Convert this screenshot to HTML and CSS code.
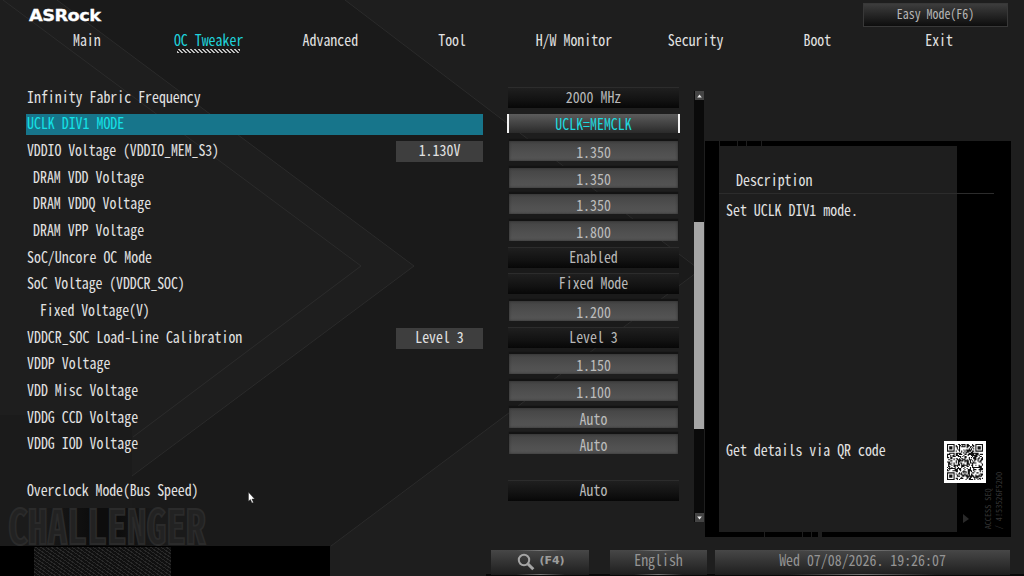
FILE: index.html
```html
<!DOCTYPE html>
<html lang="en">
<head>
    <meta charset="UTF-8">
    <title>ASRock UEFI - OC Tweaker</title>
    <meta name="viewport" content="width=device-width, initial-scale=1.0">
    <link rel="stylesheet" href="styles.css">
</head>
<body>
    <!-- chevron lines behind everything -->
    <svg class="backdrop" width="1024" height="576" viewBox="0 0 1024 576">
        <path d="M0 415 L132 415 L132 546 L0 546 Z" fill="#1b1b1b"/>
        <path d="M57 0 L345 0 L700 270 L331 546 L132 546 L132 476 L414 266 Z" fill="#1a1a1a"/>
        <g fill="none" stroke="#2c2c2c" stroke-width="0.9">
            <path d="M3 0 L361 266 L133 437"/>
            <path d="M57 0 L414 266 L132 476"/>
            <path d="M345 0 L700 270 L331 546"/>
        </g>
    </svg>

    <header class="top">
        <div class="logo"><span>ASRock</span></div>
        <button class="easy"><span class="t">Easy Mode(F6)</span></button>
    </header>

    <nav class="tabs">
        <a><span class="t">Main</span></a>
        <a class="active"><span class="t">OC Tweaker</span></a>
        <a><span class="t">Advanced</span></a>
        <a><span class="t">Tool</span></a>
        <a><span class="t">H/W Monitor</span></a>
        <a><span class="t">Security</span></a>
        <a><span class="t">Boot</span></a>
        <a><span class="t">Exit</span></a>
    </nav>

    <main class="content">
        <div class="settings">
            <div class="row"><div class="label"><span class="t">Infinity Fabric Frequency</span></div><div class="field select"><span class="t">2000 MHz</span></div></div>
            <div class="row current"><div class="label"><span class="t">UCLK DIV1 MODE</span></div><div class="field select"><span class="t">UCLK=MEMCLK</span></div></div>
            <div class="row"><div class="label"><span class="t tight">VDDIO Voltage (VDDIO_MEM_S3)</span><div class="now"><span class="t">1.130V</span></div></div><div class="field input"><span class="t">1.350</span></div></div>
            <div class="row sub"><div class="label"><span class="t">DRAM VDD Voltage</span></div><div class="field input"><span class="t">1.350</span></div></div>
            <div class="row sub"><div class="label"><span class="t">DRAM VDDQ Voltage</span></div><div class="field input"><span class="t">1.350</span></div></div>
            <div class="row sub"><div class="label"><span class="t">DRAM VPP Voltage</span></div><div class="field input"><span class="t">1.800</span></div></div>
            <div class="row"><div class="label"><span class="t">SoC/Uncore OC Mode</span></div><div class="field select"><span class="t">Enabled</span></div></div>
            <div class="row"><div class="label"><span class="t tight">SoC Voltage (VDDCR_SOC)</span></div><div class="field select"><span class="t">Fixed Mode</span></div></div>
            <div class="row sub2"><div class="label"><span class="t tight">Fixed Voltage(V)</span></div><div class="field input"><span class="t">1.200</span></div></div>
            <div class="row"><div class="label"><span class="t">VDDCR_SOC Load-Line Calibration</span><div class="now"><span class="t">Level 3</span></div></div><div class="field select"><span class="t">Level 3</span></div></div>
            <div class="row"><div class="label"><span class="t">VDDP Voltage</span></div><div class="field input"><span class="t">1.150</span></div></div>
            <div class="row"><div class="label"><span class="t">VDD Misc Voltage</span></div><div class="field input"><span class="t">1.100</span></div></div>
            <div class="row"><div class="label"><span class="t">VDDG CCD Voltage</span></div><div class="field input"><span class="t">Auto</span></div></div>
            <div class="row"><div class="label"><span class="t">VDDG IOD Voltage</span></div><div class="field input"><span class="t">Auto</span></div></div>
            <div class="row spaced"><div class="label"><span class="t tight">Overclock Mode(Bus Speed)</span></div><div class="field select"><span class="t">Auto</span></div></div>
        </div>

        <div class="scrollbar">
            <div class="arrow"><svg width="5" height="4" viewBox="0 0 5 4"><path d="M2.5 0.4 L4.8 3.6 H0.2 Z" fill="#eee"/></svg></div>
            <div class="thumb"></div>
            <div class="arrow"><svg width="5" height="4" viewBox="0 0 5 4"><path d="M2.5 3.6 L4.8 0.4 H0.2 Z" fill="#eee"/></svg></div>
        </div>

        <aside class="panel">
            <div class="notches"><i></i><i></i><i></i><i></i></div>
            <div class="panel-body">
                <div class="description">
                    <h2><span class="t">Description</span></h2>
                    <p><span class="t">Set UCLK DIV1 mode.</span></p>
                    <p class="qr-text"><span class="t">Get details via QR code</span></p>
                </div>
                <div class="side">
                    <svg class="tri" width="8" height="10" viewBox="0 0 8 10"><path d="M1 0 L7 5 L1 9 Z" fill="#292929"/></svg>
                    <div class="seq">ACCESS SEQ<br>/ 4!53526F5200</div>
                </div>
            </div>
            <div class="notches low"><i></i><i></i><i></i><i></i></div>
            <svg class="rule" width="275" height="1"><rect width="275" height="1" fill="#2c2c2c"/></svg>
            <svg class="qr" width="42" height="42" viewBox="0 0 42 42"><rect width="42" height="42" fill="#fff"/><path id="qr" fill="#111" transform="translate(3 3) scale(1.09)"/></svg>
        </aside>
    </main>

    <footer class="bottom">
        <div class="mesh"></div>
        <button class="foot find">
            <svg width="18" height="18" viewBox="0 0 18 18" fill="none" stroke="#a5a5a5"><circle cx="7" cy="7" r="5.2" stroke-width="2"/><path d="M11 11 L16.3 16.3" stroke-width="3"/></svg>
            <span>(F4)</span>
        </button>
        <button class="foot lang"><span class="t">English</span></button>
        <div class="foot clock"><span class="t">Wed 07/08/2026. 19:26:07</span></div>
    </footer>

    <div class="challenger"><span>CHALLENGER</span></div>
    <svg class="cursor" width="8" height="12" viewBox="0 0 8 12"><path d="M0.5 0.3 V9.2 L2.4 7.5 L4 11 L5.4 10.4 L3.9 7 H6.6 Z" fill="#fff" stroke="#222" stroke-width="0.4"/></svg>

    <script src="script.js"></script>
</body>
</html>
```
FILE: styles.css
```css
* {
    box-sizing: border-box;
}
body {
    margin: 0;
    width: 1024px;
    height: 576px;
    overflow: hidden;
    position: relative;
    display: flex;
    flex-direction: column;
    background: #1e1e1e;
    color: #e2e2e2;
    font-family: "Noto Sans CJK JP", "Liberation Mono", monospace;
    font-size: 13.9px;
    font-feature-settings: "hwid" 1, "liga" 0;
    font-kerning: none;
    line-height: 20px;
}
button {
    font: inherit;
    font-feature-settings: inherit;
    padding: 0;
    border: none;
    color: inherit;
}
.t {
    display: inline-block;
    white-space: pre;
    transform: translateY(-1.7px) scaleY(1.1);
}
.tight {
    letter-spacing: -0.09px;
}
.backdrop {
    position: absolute;
    left: 0;
    top: 0;
    z-index: -1;
}

/* header */
.top {
    display: flex;
    justify-content: space-between;
    height: 28px;
    padding: 3px 16px 0 29px;
}
.logo {
    width: 73px;
    padding-top: 3px;
    font: bold 16px/20px "DejaVu Sans", sans-serif;
    color: #fff;
}
.logo span {
    display: inline-block;
    letter-spacing: -0.5px;
    transform: scale(1.11, 1.02);
    transform-origin: left;
    -webkit-text-stroke: 0.3px #fff;
}
.easy {
    width: 145px;
    height: 24px;
    border: 1px solid #383838;
    background: linear-gradient(#3d3d3d, #0d0d0d);
    color: #b5b5b5;
    font-size: 11.9px;
    line-height: 20px;
}
.tabs {
    display: grid;
    grid-template-columns: repeat(8, 121.75px);
    padding-left: 26px;
    height: 57px;
    padding-top: 3px;
}
.tabs a {
    display: flex;
    flex-direction: column;
    align-items: center;
}
.tabs .active {
    color: #1fd3dc;
}
.tabs .active::after {
    content: "";
    width: 63px;
    height: 4px;
    margin-top: -2px;
    background: repeating-linear-gradient(45deg, #c0c0c0 0 1.6px, #1e1e1e 1.6px 2.83px);
}

/* settings list */
.content {
    display: flex;
    height: 461px;
}
.settings {
    width: 694px;
    padding-left: 26px;
}
.row {
    display: grid;
    grid-template-columns: 457px 173px;
    column-gap: 24px;
    align-items: center;
    height: 26.67px;
}
.spaced {
    margin-top: 19.5px;
}
.label {
    display: flex;
    justify-content: space-between;
    height: 21px;
    padding-left: 1px;
}
.sub .label { padding-left: 7px; }
.sub2 .label { padding-left: 14px; }
.now {
    width: 87px;
    background: #3e3e3e;
    text-align: center;
}
.field {
    height: 21px;
    margin: 0 1px 2px;
    text-align: center;
    color: #b9b9b9;
}
.select {
    border-top: 1px solid #2c2c2c;
    background: linear-gradient(#1f1f1f, #121212 60%, #070707);
}
.input {
    height: 20px;
    margin: 0 2px 1px;
    padding-top: 2px;
    background: linear-gradient(#444, #505050 60%, #555);
    box-shadow: inset 0 0 3px #2c2c2c, 0 -2px 1px #131313;
    color: #bcbcbc;
}
.current .label {
    background: #17758b;
    color: #14e2e6;
}
.current .field {
    height: 19px;
    margin: 0 0 2px;
    border: 2px solid #f2f2f2;
    border-width: 0 2px;
    background: linear-gradient(#5c5c5c, #2a2a2a);
    color: #1fd8df;
}
.current .field .t {
    margin-top: 1px;
}

/* scrollbar */
.scrollbar {
    width: 10px;
    height: 431px;
    margin-top: 6px;
    display: flex;
    flex-direction: column;
    justify-content: space-between;
    align-items: center;
    background: #0a0a0a;
}
.arrow {
    width: 9px;
    height: 9px;
    display: flex;
    align-items: center;
    justify-content: center;
    background: #444;
}
.thumb {
    width: 10px;
    height: 207px;
    margin-top: 38px;
    background: #a6a6a6;
}

/* description panel */
.panel {
    position: relative;
    width: 306px;
    height: 396px;
    margin: 56px 0 0 1px;
    background: #000;
}
.notches {
    display: flex;
    height: 5px;
    padding-left: 14px;
}
.notches i {
    width: 1px;
    margin-right: 17px;
    background: #1e1e1e;
}
.notches i:nth-child(2) { margin-right: 8px; }
.notches i:nth-child(3) { margin-right: 14px; }
.panel-body {
    display: flex;
    height: 386px;
    padding-left: 14px;
}
.description {
    width: 238px;
    padding: 25px 0 0 7px;
    background: #1e1e1e;
}
.description h2 {
    margin: 0 0 10px 10px;
    font-size: inherit;
    font-weight: normal;
}
.description p {
    margin: 0;
}
.description .qr-text {
    margin-top: 220px;
}
.side {
    display: flex;
    align-items: flex-end;
    padding-left: 5px;
}
.tri {
    margin-bottom: 8px;
}
.seq {
    margin: 0 0 3px 12px;
    writing-mode: vertical-rl;
    transform: rotate(180deg);
    white-space: nowrap;
    font-size: 8.2px;
    line-height: 11px;
    color: #343434;
}
.low {
    padding-left: 59px;
}
.low i { margin-right: 37px; }
.low i:nth-child(4) { width: 4px; }
.low i:nth-child(3) { margin-right: 6px; }
.rule {
    position: absolute;
    left: 14px;
    top: 52px;
}
.qr {
    position: absolute;
    left: 239px;
    top: 300px;
}

/* footer */
.bottom {
    display: flex;
    height: 30px;
    padding-top: 4px;
    background: linear-gradient(#000, #000) 0 0 / 330px 30px no-repeat,
                linear-gradient(#080808, #080808) 486px 28px / 538px 2px no-repeat;
}
.mesh {
    width: 137px;
    height: 29px;
    margin: -3px 320px 0 34px;
    background: repeating-linear-gradient(35deg, #292929 0 1px, #101010 1px 3px);
}
.foot {
    display: flex;
    align-items: center;
    justify-content: center;
    height: 25px;
    padding-bottom: 3px;
    background: radial-gradient(ellipse at center, #777, transparent 70%) center top / 50% 1px no-repeat,
                radial-gradient(ellipse at center, #777, transparent 70%) center bottom / 50% 1px no-repeat,
                linear-gradient(#474747, #1e1e1e);
    color: #949494;
}
.find {
    width: 98px;
    gap: 4px;
    padding: 0 0 1px 2px;
}
.find span {
    font: bold 11px/20px "DejaVu Sans", sans-serif;
    color: #9c9c9c;
    padding-bottom: 2px;
}
.lang {
    width: 97px;
    margin-left: 21px;
}
.clock {
    width: 295px;
    margin-left: 8px;
}

.challenger {
    position: absolute;
    left: 8px;
    top: 508px;
    width: 200px;
    height: 38px;
    background: linear-gradient(90deg, transparent 15%, #0d0d0d 40%, #0d0d0d 55%, transparent 75%);
}
.challenger span {
    display: block;
    font-size: 39.6px;
    font-weight: bold;
    line-height: 32px;
    color: #222;
    -webkit-text-stroke: 1.5px #2b2b2b;
    transform: scaleY(1.18);
}
.cursor {
    position: absolute;
    left: 248px;
    top: 492px;
}
```
FILE: script.js
```js
// draws the 33x33 QR symbol into one path
var size = 33;
var seed = 71;

function rand() {
    seed = (seed * 1103515245 + 12345) % 2147483648;
    return seed / 2147483648;
}

function finder(x, y, left, top) {
    var dx = Math.abs(x - left - 3);
    var dy = Math.abs(y - top - 3);
    var d = Math.max(dx, dy);
    if (d > 4) return null;
    return d !== 2 && d !== 4;
}

var path = "";
for (var y = 0; y < size; y++) {
    for (var x = 0; x < size; x++) {
        var on = rand() > 0.5;
        var corners = [finder(x, y, 0, 0), finder(x, y, size - 7, 0), finder(x, y, 0, size - 7)];
        corners.forEach(function (c) {
            if (c !== null) on = c;
        });
        if (on) path += "M" + x + " " + y + "h1v1h-1z";
    }
}
document.getElementById("qr").setAttribute("d", path);
```
